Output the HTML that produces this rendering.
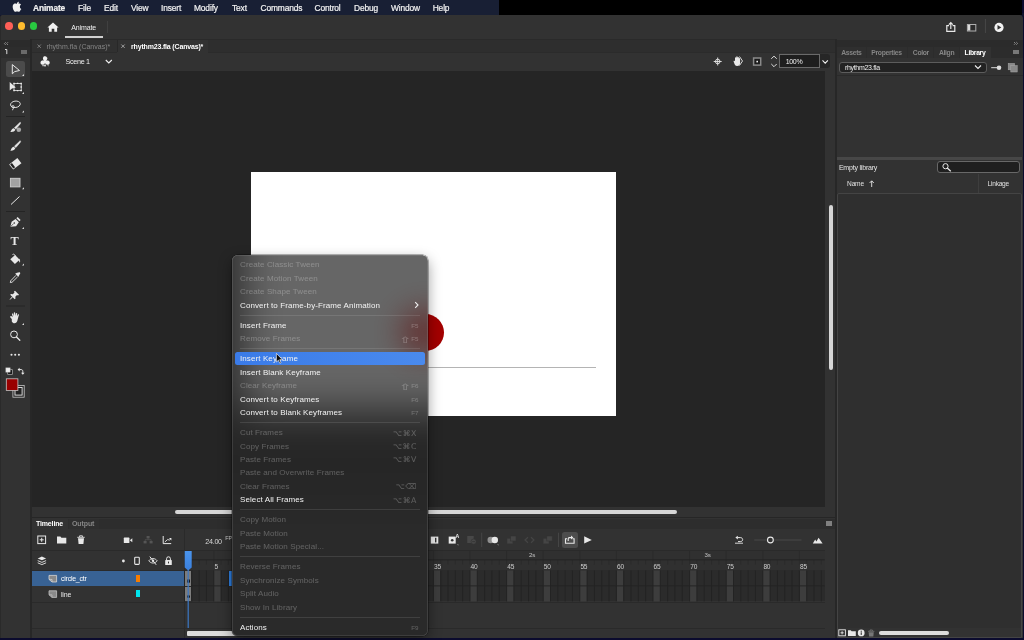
<!DOCTYPE html>
<html><head><meta charset="utf-8"><title>Animate</title>
<style>
*{box-sizing:border-box;margin:0;padding:0}
html,body{width:1024px;height:640px;overflow:hidden;background:#000;font-family:"Liberation Sans",sans-serif;color:#e6e6e6}
.a{position:absolute}
.t{position:absolute;white-space:nowrap;line-height:1}
svg{position:absolute;overflow:visible;pointer-events:none}
#mb .t{top:4.4px;font-size:8.4px;letter-spacing:-.13px;color:#f2f2f2;-webkit-text-stroke:.2px #f2f2f2}
.mi{position:absolute;left:240px;white-space:nowrap;line-height:1;font-size:8px;letter-spacing:.1px;color:#f2f2f2}
.mi.d{color:rgba(255,255,255,.26)}
.sc{position:absolute;white-space:nowrap;line-height:1;font-size:6.6px;color:rgba(255,255,255,.26);right:605.5px;text-align:right;font-family:"Liberation Sans","DejaVu Sans",sans-serif}
.sep{position:absolute;left:240px;width:180px;height:1px;background:rgba(255,255,255,.1)}
</style></head><body><div id="root" style="position:absolute;left:0;top:0;width:1024px;height:640px;overflow:hidden;will-change:transform">

<div class="a" style="left:0px;top:636px;width:1024px;height:4px;background:#0b0b2e;"></div>
<div class="a" style="left:1022px;top:0px;width:2px;height:640px;background:#0b0b2e;"></div>
<div class="a" style="left:0px;top:13px;width:1024px;height:3px;background:#10142e;"></div>
<div class="a" id="mb" style="left:0;top:0;width:1022px;height:14.6px;background:#000">
<div class="a" style="left:0px;top:0px;width:498.7px;height:14.6px;background:#181f34;"></div>
<span class="t" style="left:33px;font-weight:bold">Animate</span>
<span class="t" style="left:78px;">File</span>
<span class="t" style="left:104px;">Edit</span>
<span class="t" style="left:131px;">View</span>
<span class="t" style="left:161px;">Insert</span>
<span class="t" style="left:194px;">Modify</span>
<span class="t" style="left:232px;">Text</span>
<span class="t" style="left:260.5px;">Commands</span>
<span class="t" style="left:314.5px;">Control</span>
<span class="t" style="left:354px;">Debug</span>
<span class="t" style="left:391px;">Window</span>
<span class="t" style="left:432.7px;">Help</span>
</div>
<svg style="left:0;top:0" width="1024" height="640" viewBox="0 0 1024 640"><g transform="translate(11.7,1.6) scale(0.0116,0.0128)" fill="#f2f2f2"><path d="M788 611c-13 30-28 57-46 83-24 34-44 58-59 71-24 22-49 33-76 34-19 0-43-6-70-17s-52-17-75-17c-24 0-50 6-77 17s-49 17-66 18c-26 1-52-10-77-34-17-14-37-39-62-75-27-38-49-81-66-131-18-54-28-106-28-156 0-58 13-108 38-149 20-33 46-60 79-79s69-29 107-30c21 0 49 7 83 19 34 13 56 19 66 19 7 0 32-8 74-23 40-14 73-20 101-18 74 6 130 35 167 88-66 40-99 96-98 168 1 56 21 103 61 140 18 17 38 30 61 40-5 14-10 28-16 41zM619 27c0 44-16 85-48 123-39 45-85 71-136 67-1-5-1-11-1-17 0-42 18-88 51-124 16-19 37-34 62-47 25-12 49-19 71-20 1 6 1 12 1 18z"/></g></svg>
<div class="a" style="left:0px;top:14.6px;width:1022.7px;height:623.2px;background:#323232;border-radius:2.5px 3.5px 0 0"></div>
<div class="a" style="left:5.3px;top:22.4px;width:7.6px;height:7.6px;background:#fe5f57;border-radius:50%"></div>
<div class="a" style="left:17.5px;top:22.4px;width:7.6px;height:7.6px;background:#febc2e;border-radius:50%"></div>
<div class="a" style="left:29.7px;top:22.4px;width:7.6px;height:7.6px;background:#28c840;border-radius:50%"></div>
<span class="t" style="left:71.2px;top:24.2px;font-size:7px;color:#f0f0f0;letter-spacing:-.1px">Animate</span>
<div class="a" style="left:65px;top:36.3px;width:38px;height:1.7px;background:#cfcfcf;"></div>
<div class="a" style="left:107px;top:21px;width:1px;height:12px;background:#404040;"></div>
<svg style="left:0;top:0" width="1024" height="640" viewBox="0 0 1024 640"><path d="M53 22.6l5.6 4.9h-1.5v4.3h-2.8v-3h-2.6v3h-2.8v-4.3h-1.5z" fill="#f0f0f0"/></svg>
<svg style="left:0;top:0" width="1024" height="640" viewBox="0 0 1024 640"><g fill="none" stroke="#e8e8e8" stroke-width="1.2"><path d="M949 25.6h-2.2v5.700000000000001h8v-5.700000000000001h-2.200000000000001M950.8 29v-6M948.8 24.6l2-2l2 2"/></g><rect x="967.4" y="24.5" width="8.4" height="6.5" fill="#2c2c2c" stroke="#b0b0b0" stroke-width="1"/><rect x="967.9" y="25" width="2.4" height="5.5" fill="#ddd"/><path d="M985.4 19V33" stroke="#484848" stroke-width="1"/><circle cx="999" cy="27.4" r="4.6" fill="#f2f2f2"/><path d="M997.5 25.1v4.6l3.8-2.300000000000001z" fill="#323232"/></svg>
<div class="a" style="left:0px;top:39px;width:836px;height:13.5px;background:#2e2e2e;"></div>
<div class="a" style="left:32px;top:51.6px;width:804px;height:0.9px;background:#2b2b2b;"></div>
<div class="a" style="left:0px;top:39px;width:1022.7px;height:1px;background:#2a2a2a;"></div>
<div class="a" style="left:0px;top:39.4px;width:30.2px;height:598.4px;background:#323232;"></div>
<div class="a" style="left:0px;top:17px;width:0.8px;height:621px;background:#2a2a2a;"></div>
<div class="a" style="left:30.2px;top:39.4px;width:1.8px;height:598.4px;background:#272727;"></div>
<div class="a" style="left:1px;top:40.2px;width:29px;height:6.6px;background:#2b2b2b;"></div>
<div class="a" style="left:1px;top:47px;width:29px;height:10.5px;background:#2d2d2d;"></div>
<div class="a" style="left:21px;top:50px;width:6.3px;height:4.3px;background:#6a6a6a;"></div>
<svg style="left:0;top:0" width="1024" height="640" viewBox="0 0 1024 640"><path d="M5.8 42.2l-1.4 1.4l1.4 1.4M8 42.2l-1.4 1.4l1.4 1.4" fill="none" stroke="#aaa" stroke-width=".7"/><path d="M5 49.5h1.8v4.6" fill="none" stroke="#ddd" stroke-width="1"/></svg>
<div class="a" style="left:32px;top:40px;width:85px;height:12.2px;background:#303030;"></div>
<div class="a" style="left:117.4px;top:40px;width:90.8px;height:12.5px;background:#323232;"></div>
<div class="a" style="left:116.6px;top:40px;width:0.8px;height:12.2px;background:#282828;"></div>
<svg style="left:0;top:0" width="1024" height="640" viewBox="0 0 1024 640"><path d="M37.5 44.5l3.4 3.4M40.9 44.5l-3.4 3.4" stroke="#9a9a9a" stroke-width=".7"/><path d="M121.3 44.5l3.4 3.4M124.7 44.5l-3.4 3.4" stroke="#c8c8c8" stroke-width=".7"/></svg>
<span class="t" style="left:46.4px;top:42.7px;font-size:7px;color:#858585;letter-spacing:0">rhythm.fla (Canvas)*</span>
<span class="t" style="left:131px;top:42.7px;font-size:7px;color:#fff;font-weight:bold;letter-spacing:-.17px">rhythm23.fla (Canvas)*</span>
<div class="a" style="left:32px;top:52.5px;width:803.2px;height:18px;background:#323232;"></div>
<span class="t" style="left:65.5px;top:58px;font-size:7.2px;color:#f0f0f0;letter-spacing:-.3px">Scene 1</span>
<span class="t" style="left:38.9px;top:54.6px;font-size:13.6px;color:#f0f0f0;font-family:'DejaVu Sans',sans-serif">♣</span>
<svg style="left:0;top:0" width="1024" height="640" viewBox="0 0 1024 640"><path d="M42.2 65.7h3.6" stroke="#f0f0f0" stroke-width=".8"/><path d="M47.3 65.2h1.2v1.2z" fill="#ddd"/><path d="M105.8 60l3 3l3-3" fill="none" stroke="#f0f0f0" stroke-width="1.1"/></svg>
<svg style="left:0;top:0" width="1024" height="640" viewBox="0 0 1024 640"><g fill="none" stroke="#e8e8e8" stroke-width=".9"><circle cx="717.7" cy="61.5" r="2.3"/><path d="M717.7 57.5v8M713.7 61.5h8"/></g><path d="M734 62.5c-1-1.5 0-2.2 1-1.2v-3.2c0-1 1.3-1 1.3 0v-1c0-1 1.3-1 1.3 0v.6c0-1 1.3-1 1.3 0v1c0-.9 1.2-.9 1.2 0v4.300000000000001c0 2-1 3-3 3s-2.400000000000002-1.5-3.100000000000002-3.5z" fill="#e8e8e8"/><path d="M739.5 56.5l3 4.500000000000001l-3 4.500000000000001" fill="none" stroke="#e8e8e8" stroke-width=".9"/><rect x="753.6" y="58" width="7.1" height="7.1" fill="#1c1c1c" stroke="#8a8a8a" stroke-width="1.5"/><rect x="756.4" y="60.8" width="1.6" height="1.6" fill="#eee"/><path d="M771.3 58.8l2.7-2.7l2.7 2.7M771.3 64l2.7 2.7l2.7-2.7" fill="none" stroke="#e0e0e0" stroke-width="1"/><path d="M822.5 60.4l2.7 2.7l2.7-2.7" fill="none" stroke="#f0f0f0" stroke-width="1.1"/></svg>
<div class="a" style="left:779.4px;top:54.4px;width:40.6px;height:14px;background:#1e1e1e;border:1px solid #6a6a6a"></div>
<div class="a" style="left:820px;top:54.4px;width:10.3px;height:14px;background:#262626;border-radius:0 3px 3px 0;z-index:-0"></div>
<svg style="left:0;top:0" width="1024" height="640" viewBox="0 0 1024 640"><path d="M822.5 60.4l2.7 2.7l2.7-2.7" fill="none" stroke="#f0f0f0" stroke-width="1.1"/></svg>
<span class="t" style="left:785.7px;top:58.3px;font-size:7px;color:#f0f0f0;letter-spacing:-.3px">100%</span>
<div class="a" style="left:32px;top:70.5px;width:792.8px;height:436.2px;background:#252525;"></div>
<div class="a" style="left:824.8px;top:70.5px;width:10.4px;height:436.5px;background:#323232;"></div>
<div class="a" style="left:251px;top:172px;width:365.2px;height:243.5px;background:#fff;"></div>
<div class="a" style="left:405.8px;top:313.5px;width:37.8px;height:37.8px;background:#a30000;border-radius:50%"></div>
<div class="a" style="left:270px;top:367px;width:326px;height:1px;background:#b4b4b4;"></div>
<div class="a" style="left:32px;top:506.7px;width:803.2px;height:10.8px;background:#323232;"></div>
<div class="a" style="left:174.8px;top:510px;width:502px;height:4px;background:#d6d6d6;border-radius:2px"></div>
<div class="a" style="left:828.8px;top:204.8px;width:4px;height:165.4px;background:#d6d6d6;border-radius:2px"></div>
<div class="a" style="left:32px;top:517.1px;width:803.2px;height:1.4px;background:#262626;"></div>
<div class="a" style="left:5.5px;top:60.8px;width:19.5px;height:16px;background:#4b4b4b;border-radius:2.5px"></div>
<svg style="left:0;top:0" width="1024" height="640" viewBox="0 0 1024 640"><path d="M12.3 64.6v9.2l2.4-2.2l4.8-1.1z" fill="none" stroke="#e8e8e8" stroke-width="1" stroke-linejoin="miter"/><path d="M24 74v2h-2z" fill="#ddd"/><path d="M9.7 82v8.6l2.3-2.2l3.8-1z" fill="#e8e8e8"/><rect x="14" y="83.4" width="7.2" height="7.2" fill="none" stroke="#e8e8e8" stroke-width=".8"/><path d="M13.3 82.7h1.500000000000001v1.500000000000001h-1.500000000000001zM20.4 82.7h1.500000000000001v1.500000000000001h-1.500000000000001zM20.4 89.8h1.500000000000001v1.500000000000001h-1.500000000000001zM13.3 89.8h1.500000000000001v1.500000000000001h-1.500000000000001zM16.9 82.7h1.400000000000001v1.400000000000001h-1.400000000000001zM16.9 89.9h1.400000000000001v1.400000000000001h-1.400000000000001zM20.5 86.3h1.400000000000001v1.400000000000001h-1.400000000000001z" fill="#e8e8e8"/><path d="M24 92v2h-2z" fill="#ddd"/><g fill="none" stroke="#e8e8e8" stroke-width=".9"><ellipse cx="15.4" cy="104.3" rx="4.9" ry="3.2" transform="rotate(-8 15.4 104.3)"/><circle cx="13" cy="106.7" r="1.1"/><path d="M13.3 107.8c.3 1-.3 1.800000000000001-1.300000000000001 2.400000000000001"/></g><path d="M24 110.5v2h-2z" fill="#ddd"/><path d="M20.3 122.3c.5.5.3 1-.1 1.600000000000001l-4.300000000000001 5.200000000000001l-1.500000000000001-1.400000000000001l5-4.800000000000001c.4-.4.7-.7.9-.6z" fill="#e8e8e8" stroke="#e8e8e8" stroke-width=".5"/><path d="M13.8 128.3l1.5 1.5c-.5 1.800000000000001-2.5 2.400000000000001-5 2.200000000000001c1.200000000000001-1 .8-3.200000000000001 3.500000000000001-3.700000000000001z" fill="#e8e8e8"/><circle cx="18.8" cy="129.8" r="2.3" fill="#a8a8a8"/><path d="M20.3 140.8c.5.5.3 1-.1 1.600000000000001l-4.300000000000001 5.200000000000001l-1.500000000000001-1.400000000000001l5-4.800000000000001c.4-.4.7-.7.9-.6z" fill="#e8e8e8" stroke="#e8e8e8" stroke-width=".5"/><path d="M13.8 146.8l1.5 1.5c-.5 1.800000000000001-2.500000000000001 2.600000000000001-5 2.400000000000001c1.200000000000001-1 .8-3.400000000000001 3.500000000000001-3.900000000000001z" fill="#e8e8e8"/><g transform="rotate(-38 15.3 163.8)"><rect x="10.1" y="160.5" width="10.4" height="6.6" fill="#e8e8e8"/><rect x="10.8" y="161.2" width="2.3" height="5.2" fill="#222"/></g><rect x="10.4" y="178.3" width="9.6" height="8.6" fill="#a2a2a2" stroke="#cfcfcf" stroke-width=".9"/><path d="M24 187.2v2h-2z" fill="#ddd"/><path d="M11 204.5l8.5-8" stroke="#e8e8e8" stroke-width="1"/><path d="M10.4 226.8l1.2-5l4-2.700000000000001l3.2 3.2l-2.700000000000001 4z" fill="#e8e8e8"/><path d="M16.4 218.3l1.2-1.2l3 3l-1.200000000000001 1.200000000000001z" fill="#e8e8e8"/><path d="M10.600000000000001 226.6l3-3" stroke="#323232" stroke-width=".7"/><circle cx="14.3" cy="223" r=".8" fill="#323232"/><path d="M24 227v2h-2z" fill="#ddd"/><path d="M10 264l2-2.500000000000001" stroke="#e8e8e8" stroke-width="0"/><path d="M10.3 259.3l4.8-4.3l4.600000000000001 4.800000000000001l-4.800000000000001 4.300000000000001z" fill="#e8e8e8"/><path d="M12.5 254.5c1.500000000000001-1.000000000000001 2.700000000000001.2 3.0000000000000004 2.8" fill="none" stroke="#e8e8e8" stroke-width=".9"/><path d="M19.2 258.5c.8 1.2 1.300000000000001 2.700000000000001.6 4.200000000000001c-.9-1.2-.9-2.700000000000001-.6-4.200000000000001z" fill="#e8e8e8"/><path d="M24 263.5v2h-2z" fill="#ddd"/><path d="M18.2 272.8c.8-.8 2-.4 2.000000000000001.6c0 .5-.6 1.100000000000001-1.400000000000001 1.800000000000001l.5.5l-1 1l-3-3l1-1l.5.5c.5-.6 1-.9 1.400000000000001-.4z" fill="#e8e8e8"/><path d="M16 275.3l-5.3 5.5l-.4 1.800000000000001l1.800000000000001-.4l5.500000000000001-5.300000000000001" fill="none" stroke="#e8e8e8" stroke-width=".9"/><path d="M15 290.8l4 4l-1 .7l-1 -.5l-1.700000000000001 1.700000000000001l.2 1.800000000000001l-.8.8l-4.5-4.5l.8-.8l1.800000000000001.2l1.700000000000001-1.700000000000001l-.5-1z" fill="#e8e8e8"/><path d="M12.3 297l-2.2 2.5" stroke="#e8e8e8" stroke-width="1"/><path transform="translate(0,1)" d="M11.8 318c-1.500000000000001-1.600000000000001-2.200000000000001-2.200000000000001-1.300000000000001-2.800000000000001c.8-.4 1.500000000000001.5 2.200000000000001 1.100000000000001l-.7-3.000000000000001c-.2-.9.9-1.300000000000001 1.200000000000001-.4l.7 2l-.1-2.800000000000001c0-1 1.300000000000001-1 1.400000000000001 0l.2 2.700000000000001l.5-2.300000000000001c.2-.9 1.400000000000001-.7 1.300000000000001.2l-.3 2.600000000000001l.9-1.600000000000001c.5-.8 1.500000000000001-.3 1.100000000000001.6c-.8 2-.9 3.500000000000001-1.400000000000001 5.000000000000001c-.5 1.700000000000001-1.600000000000001 3.000000000000001-3.000000000000001 3.000000000000001c-1.300000000000001 0-2.000000000000001-.9-2.700000000000001-1.900000000000001z" fill="#e8e8e8"/><path d="M24 323v2h-2z" fill="#ddd"/><circle cx="14" cy="334.4" r="3.4" fill="none" stroke="#e8e8e8" stroke-width="1"/><path d="M16.5 337l3.3 3.300000000000001" stroke="#e8e8e8" stroke-width="1.3" stroke-linecap="round"/><circle cx="11.5" cy="354.8" r="1.05" fill="#e8e8e8"/><circle cx="15.2" cy="354.8" r="1.05" fill="#e8e8e8"/><circle cx="18.9" cy="354.8" r="1.05" fill="#e8e8e8"/><rect x="7.700000000000001" y="369.7" width="4.6" height="4.6" fill="#111" stroke="#bbb" stroke-width=".7"/><rect x="5.800000000000001" y="367.8" width="4.4" height="4.4" fill="#eee" stroke="#999" stroke-width=".5"/><path d="M19 369.6h2.200000000000001c1.200000000000001 0 1.600000000000001.8 1.600000000000001 1.800000000000001v2" fill="none" stroke="#e8e8e8" stroke-width="1"/><path d="M19.6 367.8l-2 1.800000000000001l2 1.800000000000001zM21 372.8l1.800000000000001 2l1.800000000000001-2z" fill="#e8e8e8"/><rect x="12.9" y="385.4" width="11.3" height="11.8" fill="#2a2a2a" stroke="#c8c8c8" stroke-width=".8"/><rect x="15" y="387.5" width="7.1" height="7.6" fill="#222" stroke="#e8e8e8" stroke-width=".9"/><rect x="6.3" y="378.8" width="11.6" height="11.6" fill="#990000" stroke="#c4c4c4" stroke-width=".8"/><path d="M6 116.5h19" stroke="#242424" stroke-width="1"/><path d="M6 211.5h19" stroke="#242424" stroke-width="1"/><path d="M6 306h19" stroke="#242424" stroke-width="1"/></svg>
<span class="t" style="left:10.6px;top:235.2px;font-size:12.3px;color:#e8e8e8;font-family:'Liberation Serif',serif;font-weight:bold">T</span>
<div class="a" style="left:32px;top:518.5px;width:803.2px;height:10px;background:#2d2d2d;"></div>
<div class="a" style="left:32px;top:518.5px;width:36px;height:10.5px;background:#323232;"></div>
<div class="a" style="left:68.5px;top:518.5px;width:30px;height:10px;background:#2f2f2f;"></div>
<span class="t" style="left:36px;top:519.8px;font-size:7px;color:#fff;font-weight:bold;letter-spacing:-.15px">Timeline</span>
<span class="t" style="left:72px;top:519.8px;font-size:7px;color:#858585;font-weight:bold;letter-spacing:-.1px">Output</span>
<div class="a" style="left:826px;top:521.1px;width:6.1px;height:4.6px;background:#808080;"></div>
<div class="a" style="left:32px;top:528.5px;width:803.2px;height:109.3px;background:#323232;"></div>
<div class="a" style="left:32px;top:550px;width:792.8px;height:1px;background:#2a2a2a;"></div>
<div class="a" style="left:184px;top:528.5px;width:1px;height:109px;background:#2a2a2a;"></div>
<div class="a" style="left:32px;top:570.9px;width:152px;height:15px;background:#386294;"></div>
<div class="a" style="left:32px;top:570.2px;width:792.8px;height:0.8px;background:#2a2a2a;"></div>
<div class="a" style="left:32px;top:601.5px;width:792.8px;height:1px;background:#2a2a2a;"></div>
<div class="a" style="left:32px;top:628.3px;width:792.8px;height:1px;background:#2a2a2a;"></div>
<span class="t" style="left:61px;top:575px;font-size:7px;color:#fff;letter-spacing:-.25px">circle_ctr</span>
<span class="t" style="left:61px;top:590.5px;font-size:7px;color:#e6e6e6;letter-spacing:-.2px">line</span>
<div class="a" style="left:135.8px;top:574.7px;width:4px;height:7.3px;background:#f57c00;"></div>
<div class="a" style="left:135.8px;top:590px;width:4px;height:7.3px;background:#00e5ee;"></div>
<svg style="left:0;top:0" width="1024" height="640" viewBox="0 0 1024 640"><rect x="37.8" y="536" width="7.8" height="7.6" fill="none" stroke="#e8e8e8" stroke-width="1"/><path d="M41.7 537.8v4M39.7 539.8h4" stroke="#e8e8e8" stroke-width="1"/><path d="M57 536.6h3.400000000000001l1 1.200000000000001h4.900000000000001v5.700000000000001h-9.3z" fill="#e8e8e8"/><path d="M77.3 537.3h7.4M79.6 537v-1.200000000000001h2.800000000000001v1.200000000000001" fill="none" stroke="#e8e8e8" stroke-width=".9"/><path d="M78 538.3h6l-.6 5.700000000000001h-4.800000000000001z" fill="#e8e8e8"/><rect x="123.8" y="537.6" width="5.6" height="5.4" rx=".6" fill="#e8e8e8"/><path d="M129.8 540.3l2.500000000000001-2.000000000000001v4.000000000000001z" fill="#e8e8e8"/><g fill="#555"><rect x="146.6" y="536" width="3" height="2.4"/><rect x="143.6" y="541" width="3" height="2.4"/><rect x="149.6" y="541" width="3" height="2.4"/></g><path d="M148.1 538.4v1.300000000000001M145.1 541v-1.300000000000001h6v1.300000000000001" fill="none" stroke="#555" stroke-width=".7"/><path d="M163.2 536v7.6h8" fill="none" stroke="#e8e8e8" stroke-width="1"/><path d="M164.8 542l3-2.600000000000001l1.400000000000001.8l1.800000000000001-1.600000000000001" fill="none" stroke="#e8e8e8" stroke-width=".9"/><path d="M169 538h2.400000000000001v2.400000000000001z" fill="#e8e8e8"/><path d="M41.9 556.6l4.2 1.800000000000001l-4.200000000000001 1.800000000000001l-4.200000000000001-1.800000000000001z" fill="#e8e8e8"/><path d="M37.7 560.6l4.2 1.800000000000001l4.200000000000001-1.800000000000001M37.7 562.8l4.2 1.800000000000001l4.200000000000001-1.800000000000001" fill="none" stroke="#e8e8e8" stroke-width=".9"/><circle cx="123.4" cy="561" r="1.4" fill="#e8e8e8"/><rect x="134.7" y="557.2" width="4.6" height="7.2" rx=".8" fill="none" stroke="#e8e8e8" stroke-width="1.1"/><path d="M148.8 560.8c2.200000000000001-3.000000000000001 6.200000000000001-3.000000000000001 8.4 0c-2.200000000000001 3.000000000000001-6.200000000000001 3.000000000000001-8.4 0z" fill="none" stroke="#e8e8e8" stroke-width=".9"/><circle cx="153" cy="560.8" r="1.2" fill="#e8e8e8"/><path d="M149.8 556.6l6.4 8.2" stroke="#e8e8e8" stroke-width="1"/><rect x="165.2" y="560" width="6.6" height="5" rx=".6" fill="#e8e8e8"/><path d="M166.6 560v-1.300000000000001a1.900000000000001 1.900000000000001 0 0 1 3.800000000000001 0v1.300000000000001" fill="none" stroke="#e8e8e8" stroke-width="1"/><rect x="168" y="561.6" width="1" height="1.8" fill="#323232"/><path d="M49 575.4h7.6v6.6h-4.6l-3-2.600000000000001z" fill="#8a8a8a" stroke="#d8d8d8" stroke-width=".8"/><path d="M49 579.4h3v2.600000000000001" fill="none" stroke="#d8d8d8" stroke-width=".7"/><path d="M49 590.8h7.6v6.6h-4.6l-3-2.600000000000001z" fill="#8a8a8a" stroke="#c0c0c0" stroke-width=".8"/><path d="M49 594.8h3v2.600000000000001" fill="none" stroke="#c0c0c0" stroke-width=".7"/></svg>
<div class="a" style="left:185.0px;top:551px;width:640.3px;height:19.5px;background:#303030;"></div>
<div class="a" style="left:185.0px;top:570.4px;width:640.3px;height:31px;background:#2b2b2b;"></div>
<svg style="left:0;top:0" width="1024" height="640" viewBox="0 0 1024 640"><rect x="213.78" y="570.4" width="7.32" height="31" fill="#3d3d3d"/><rect x="250.38" y="570.4" width="7.32" height="31" fill="#3d3d3d"/><rect x="286.98" y="570.4" width="7.32" height="31" fill="#3d3d3d"/><rect x="323.58" y="570.4" width="7.32" height="31" fill="#3d3d3d"/><rect x="360.18" y="570.4" width="7.32" height="31" fill="#3d3d3d"/><rect x="396.78" y="570.4" width="7.32" height="31" fill="#3d3d3d"/><rect x="433.38" y="570.4" width="7.32" height="31" fill="#3d3d3d"/><rect x="469.98" y="570.4" width="7.32" height="31" fill="#3d3d3d"/><rect x="506.58" y="570.4" width="7.32" height="31" fill="#3d3d3d"/><rect x="543.18" y="570.4" width="7.32" height="31" fill="#3d3d3d"/><rect x="579.78" y="570.4" width="7.32" height="31" fill="#3d3d3d"/><rect x="616.38" y="570.4" width="7.32" height="31" fill="#3d3d3d"/><rect x="652.98" y="570.4" width="7.32" height="31" fill="#3d3d3d"/><rect x="689.58" y="570.4" width="7.32" height="31" fill="#3d3d3d"/><rect x="726.18" y="570.4" width="7.32" height="31" fill="#3d3d3d"/><rect x="762.78" y="570.4" width="7.32" height="31" fill="#3d3d3d"/><rect x="799.38" y="570.4" width="7.32" height="31" fill="#3d3d3d"/><path d="M184.50 570.4V601.4" stroke="#232323" stroke-width="1"/><path d="M184.50 560V564.6" stroke="#2a2a2a" stroke-width="0.8"/><path d="M191.82 570.4V601.4" stroke="#232323" stroke-width="1"/><path d="M191.82 560V564.6" stroke="#2a2a2a" stroke-width="0.8"/><path d="M199.14 570.4V601.4" stroke="#232323" stroke-width="1"/><path d="M199.14 560V564.6" stroke="#2a2a2a" stroke-width="0.8"/><path d="M206.46 570.4V601.4" stroke="#232323" stroke-width="1"/><path d="M206.46 560V564.6" stroke="#2a2a2a" stroke-width="0.8"/><path d="M213.78 570.4V601.4" stroke="#232323" stroke-width="1"/><path d="M213.78 560V564.6" stroke="#2a2a2a" stroke-width="0.8"/><path d="M213.78 551V560" stroke="#2a2a2a" stroke-width="0.8"/><path d="M221.10 570.4V601.4" stroke="#232323" stroke-width="1"/><path d="M221.10 560V564.6" stroke="#2a2a2a" stroke-width="0.8"/><path d="M228.42 570.4V601.4" stroke="#232323" stroke-width="1"/><path d="M228.42 560V564.6" stroke="#2a2a2a" stroke-width="0.8"/><path d="M235.74 570.4V601.4" stroke="#232323" stroke-width="1"/><path d="M235.74 560V564.6" stroke="#2a2a2a" stroke-width="0.8"/><path d="M243.06 570.4V601.4" stroke="#232323" stroke-width="1"/><path d="M243.06 560V564.6" stroke="#2a2a2a" stroke-width="0.8"/><path d="M250.38 570.4V601.4" stroke="#232323" stroke-width="1"/><path d="M250.38 560V564.6" stroke="#2a2a2a" stroke-width="0.8"/><path d="M250.38 551V560" stroke="#2a2a2a" stroke-width="0.8"/><path d="M257.70 570.4V601.4" stroke="#232323" stroke-width="1"/><path d="M257.70 560V564.6" stroke="#2a2a2a" stroke-width="0.8"/><path d="M265.02 570.4V601.4" stroke="#232323" stroke-width="1"/><path d="M265.02 560V564.6" stroke="#2a2a2a" stroke-width="0.8"/><path d="M272.34 570.4V601.4" stroke="#232323" stroke-width="1"/><path d="M272.34 560V564.6" stroke="#2a2a2a" stroke-width="0.8"/><path d="M279.66 570.4V601.4" stroke="#232323" stroke-width="1"/><path d="M279.66 560V564.6" stroke="#2a2a2a" stroke-width="0.8"/><path d="M286.98 570.4V601.4" stroke="#232323" stroke-width="1"/><path d="M286.98 560V564.6" stroke="#2a2a2a" stroke-width="0.8"/><path d="M286.98 551V560" stroke="#2a2a2a" stroke-width="0.8"/><path d="M294.30 570.4V601.4" stroke="#232323" stroke-width="1"/><path d="M294.30 560V564.6" stroke="#2a2a2a" stroke-width="0.8"/><path d="M301.62 570.4V601.4" stroke="#232323" stroke-width="1"/><path d="M301.62 560V564.6" stroke="#2a2a2a" stroke-width="0.8"/><path d="M308.94 570.4V601.4" stroke="#232323" stroke-width="1"/><path d="M308.94 560V564.6" stroke="#2a2a2a" stroke-width="0.8"/><path d="M316.26 570.4V601.4" stroke="#232323" stroke-width="1"/><path d="M316.26 560V564.6" stroke="#2a2a2a" stroke-width="0.8"/><path d="M323.58 570.4V601.4" stroke="#232323" stroke-width="1"/><path d="M323.58 560V564.6" stroke="#2a2a2a" stroke-width="0.8"/><path d="M323.58 551V560" stroke="#2a2a2a" stroke-width="0.8"/><path d="M330.90 570.4V601.4" stroke="#232323" stroke-width="1"/><path d="M330.90 560V564.6" stroke="#2a2a2a" stroke-width="0.8"/><path d="M338.22 570.4V601.4" stroke="#232323" stroke-width="1"/><path d="M338.22 560V564.6" stroke="#2a2a2a" stroke-width="0.8"/><path d="M345.54 570.4V601.4" stroke="#232323" stroke-width="1"/><path d="M345.54 560V564.6" stroke="#2a2a2a" stroke-width="0.8"/><path d="M352.86 570.4V601.4" stroke="#232323" stroke-width="1"/><path d="M352.86 560V564.6" stroke="#2a2a2a" stroke-width="0.8"/><path d="M360.18 570.4V601.4" stroke="#232323" stroke-width="1"/><path d="M360.18 560V564.6" stroke="#2a2a2a" stroke-width="0.8"/><path d="M360.18 551V560" stroke="#2a2a2a" stroke-width="0.8"/><path d="M367.50 570.4V601.4" stroke="#232323" stroke-width="1"/><path d="M367.50 560V564.6" stroke="#2a2a2a" stroke-width="0.8"/><path d="M374.82 570.4V601.4" stroke="#232323" stroke-width="1"/><path d="M374.82 560V564.6" stroke="#2a2a2a" stroke-width="0.8"/><path d="M382.14 570.4V601.4" stroke="#232323" stroke-width="1"/><path d="M382.14 560V564.6" stroke="#2a2a2a" stroke-width="0.8"/><path d="M389.46 570.4V601.4" stroke="#232323" stroke-width="1"/><path d="M389.46 560V564.6" stroke="#2a2a2a" stroke-width="0.8"/><path d="M396.78 570.4V601.4" stroke="#232323" stroke-width="1"/><path d="M396.78 560V564.6" stroke="#2a2a2a" stroke-width="0.8"/><path d="M396.78 551V560" stroke="#2a2a2a" stroke-width="0.8"/><path d="M404.10 570.4V601.4" stroke="#232323" stroke-width="1"/><path d="M404.10 560V564.6" stroke="#2a2a2a" stroke-width="0.8"/><path d="M411.42 570.4V601.4" stroke="#232323" stroke-width="1"/><path d="M411.42 560V564.6" stroke="#2a2a2a" stroke-width="0.8"/><path d="M418.74 570.4V601.4" stroke="#232323" stroke-width="1"/><path d="M418.74 560V564.6" stroke="#2a2a2a" stroke-width="0.8"/><path d="M426.06 570.4V601.4" stroke="#232323" stroke-width="1"/><path d="M426.06 560V564.6" stroke="#2a2a2a" stroke-width="0.8"/><path d="M433.38 570.4V601.4" stroke="#232323" stroke-width="1"/><path d="M433.38 560V564.6" stroke="#2a2a2a" stroke-width="0.8"/><path d="M433.38 551V560" stroke="#2a2a2a" stroke-width="0.8"/><path d="M440.70 570.4V601.4" stroke="#232323" stroke-width="1"/><path d="M440.70 560V564.6" stroke="#2a2a2a" stroke-width="0.8"/><path d="M448.02 570.4V601.4" stroke="#232323" stroke-width="1"/><path d="M448.02 560V564.6" stroke="#2a2a2a" stroke-width="0.8"/><path d="M455.34 570.4V601.4" stroke="#232323" stroke-width="1"/><path d="M455.34 560V564.6" stroke="#2a2a2a" stroke-width="0.8"/><path d="M462.66 570.4V601.4" stroke="#232323" stroke-width="1"/><path d="M462.66 560V564.6" stroke="#2a2a2a" stroke-width="0.8"/><path d="M469.98 570.4V601.4" stroke="#232323" stroke-width="1"/><path d="M469.98 560V564.6" stroke="#2a2a2a" stroke-width="0.8"/><path d="M469.98 551V560" stroke="#2a2a2a" stroke-width="0.8"/><path d="M477.30 570.4V601.4" stroke="#232323" stroke-width="1"/><path d="M477.30 560V564.6" stroke="#2a2a2a" stroke-width="0.8"/><path d="M484.62 570.4V601.4" stroke="#232323" stroke-width="1"/><path d="M484.62 560V564.6" stroke="#2a2a2a" stroke-width="0.8"/><path d="M491.94 570.4V601.4" stroke="#232323" stroke-width="1"/><path d="M491.94 560V564.6" stroke="#2a2a2a" stroke-width="0.8"/><path d="M499.26 570.4V601.4" stroke="#232323" stroke-width="1"/><path d="M499.26 560V564.6" stroke="#2a2a2a" stroke-width="0.8"/><path d="M506.58 570.4V601.4" stroke="#232323" stroke-width="1"/><path d="M506.58 560V564.6" stroke="#2a2a2a" stroke-width="0.8"/><path d="M506.58 551V560" stroke="#2a2a2a" stroke-width="0.8"/><path d="M513.90 570.4V601.4" stroke="#232323" stroke-width="1"/><path d="M513.90 560V564.6" stroke="#2a2a2a" stroke-width="0.8"/><path d="M521.22 570.4V601.4" stroke="#232323" stroke-width="1"/><path d="M521.22 560V564.6" stroke="#2a2a2a" stroke-width="0.8"/><path d="M528.54 570.4V601.4" stroke="#232323" stroke-width="1"/><path d="M528.54 560V564.6" stroke="#2a2a2a" stroke-width="0.8"/><path d="M535.86 570.4V601.4" stroke="#232323" stroke-width="1"/><path d="M535.86 560V564.6" stroke="#2a2a2a" stroke-width="0.8"/><path d="M543.18 570.4V601.4" stroke="#232323" stroke-width="1"/><path d="M543.18 560V564.6" stroke="#2a2a2a" stroke-width="0.8"/><path d="M543.18 551V560" stroke="#2a2a2a" stroke-width="0.8"/><path d="M550.50 570.4V601.4" stroke="#232323" stroke-width="1"/><path d="M550.50 560V564.6" stroke="#2a2a2a" stroke-width="0.8"/><path d="M557.82 570.4V601.4" stroke="#232323" stroke-width="1"/><path d="M557.82 560V564.6" stroke="#2a2a2a" stroke-width="0.8"/><path d="M565.14 570.4V601.4" stroke="#232323" stroke-width="1"/><path d="M565.14 560V564.6" stroke="#2a2a2a" stroke-width="0.8"/><path d="M572.46 570.4V601.4" stroke="#232323" stroke-width="1"/><path d="M572.46 560V564.6" stroke="#2a2a2a" stroke-width="0.8"/><path d="M579.78 570.4V601.4" stroke="#232323" stroke-width="1"/><path d="M579.78 560V564.6" stroke="#2a2a2a" stroke-width="0.8"/><path d="M579.78 551V560" stroke="#2a2a2a" stroke-width="0.8"/><path d="M587.10 570.4V601.4" stroke="#232323" stroke-width="1"/><path d="M587.10 560V564.6" stroke="#2a2a2a" stroke-width="0.8"/><path d="M594.42 570.4V601.4" stroke="#232323" stroke-width="1"/><path d="M594.42 560V564.6" stroke="#2a2a2a" stroke-width="0.8"/><path d="M601.74 570.4V601.4" stroke="#232323" stroke-width="1"/><path d="M601.74 560V564.6" stroke="#2a2a2a" stroke-width="0.8"/><path d="M609.06 570.4V601.4" stroke="#232323" stroke-width="1"/><path d="M609.06 560V564.6" stroke="#2a2a2a" stroke-width="0.8"/><path d="M616.38 570.4V601.4" stroke="#232323" stroke-width="1"/><path d="M616.38 560V564.6" stroke="#2a2a2a" stroke-width="0.8"/><path d="M616.38 551V560" stroke="#2a2a2a" stroke-width="0.8"/><path d="M623.70 570.4V601.4" stroke="#232323" stroke-width="1"/><path d="M623.70 560V564.6" stroke="#2a2a2a" stroke-width="0.8"/><path d="M631.02 570.4V601.4" stroke="#232323" stroke-width="1"/><path d="M631.02 560V564.6" stroke="#2a2a2a" stroke-width="0.8"/><path d="M638.34 570.4V601.4" stroke="#232323" stroke-width="1"/><path d="M638.34 560V564.6" stroke="#2a2a2a" stroke-width="0.8"/><path d="M645.66 570.4V601.4" stroke="#232323" stroke-width="1"/><path d="M645.66 560V564.6" stroke="#2a2a2a" stroke-width="0.8"/><path d="M652.98 570.4V601.4" stroke="#232323" stroke-width="1"/><path d="M652.98 560V564.6" stroke="#2a2a2a" stroke-width="0.8"/><path d="M652.98 551V560" stroke="#2a2a2a" stroke-width="0.8"/><path d="M660.30 570.4V601.4" stroke="#232323" stroke-width="1"/><path d="M660.30 560V564.6" stroke="#2a2a2a" stroke-width="0.8"/><path d="M667.62 570.4V601.4" stroke="#232323" stroke-width="1"/><path d="M667.62 560V564.6" stroke="#2a2a2a" stroke-width="0.8"/><path d="M674.94 570.4V601.4" stroke="#232323" stroke-width="1"/><path d="M674.94 560V564.6" stroke="#2a2a2a" stroke-width="0.8"/><path d="M682.26 570.4V601.4" stroke="#232323" stroke-width="1"/><path d="M682.26 560V564.6" stroke="#2a2a2a" stroke-width="0.8"/><path d="M689.58 570.4V601.4" stroke="#232323" stroke-width="1"/><path d="M689.58 560V564.6" stroke="#2a2a2a" stroke-width="0.8"/><path d="M689.58 551V560" stroke="#2a2a2a" stroke-width="0.8"/><path d="M696.90 570.4V601.4" stroke="#232323" stroke-width="1"/><path d="M696.90 560V564.6" stroke="#2a2a2a" stroke-width="0.8"/><path d="M704.22 570.4V601.4" stroke="#232323" stroke-width="1"/><path d="M704.22 560V564.6" stroke="#2a2a2a" stroke-width="0.8"/><path d="M711.54 570.4V601.4" stroke="#232323" stroke-width="1"/><path d="M711.54 560V564.6" stroke="#2a2a2a" stroke-width="0.8"/><path d="M718.86 570.4V601.4" stroke="#232323" stroke-width="1"/><path d="M718.86 560V564.6" stroke="#2a2a2a" stroke-width="0.8"/><path d="M726.18 570.4V601.4" stroke="#232323" stroke-width="1"/><path d="M726.18 560V564.6" stroke="#2a2a2a" stroke-width="0.8"/><path d="M726.18 551V560" stroke="#2a2a2a" stroke-width="0.8"/><path d="M733.50 570.4V601.4" stroke="#232323" stroke-width="1"/><path d="M733.50 560V564.6" stroke="#2a2a2a" stroke-width="0.8"/><path d="M740.82 570.4V601.4" stroke="#232323" stroke-width="1"/><path d="M740.82 560V564.6" stroke="#2a2a2a" stroke-width="0.8"/><path d="M748.14 570.4V601.4" stroke="#232323" stroke-width="1"/><path d="M748.14 560V564.6" stroke="#2a2a2a" stroke-width="0.8"/><path d="M755.46 570.4V601.4" stroke="#232323" stroke-width="1"/><path d="M755.46 560V564.6" stroke="#2a2a2a" stroke-width="0.8"/><path d="M762.78 570.4V601.4" stroke="#232323" stroke-width="1"/><path d="M762.78 560V564.6" stroke="#2a2a2a" stroke-width="0.8"/><path d="M762.78 551V560" stroke="#2a2a2a" stroke-width="0.8"/><path d="M770.10 570.4V601.4" stroke="#232323" stroke-width="1"/><path d="M770.10 560V564.6" stroke="#2a2a2a" stroke-width="0.8"/><path d="M777.42 570.4V601.4" stroke="#232323" stroke-width="1"/><path d="M777.42 560V564.6" stroke="#2a2a2a" stroke-width="0.8"/><path d="M784.74 570.4V601.4" stroke="#232323" stroke-width="1"/><path d="M784.74 560V564.6" stroke="#2a2a2a" stroke-width="0.8"/><path d="M792.06 570.4V601.4" stroke="#232323" stroke-width="1"/><path d="M792.06 560V564.6" stroke="#2a2a2a" stroke-width="0.8"/><path d="M799.38 570.4V601.4" stroke="#232323" stroke-width="1"/><path d="M799.38 560V564.6" stroke="#2a2a2a" stroke-width="0.8"/><path d="M799.38 551V560" stroke="#2a2a2a" stroke-width="0.8"/><path d="M806.70 570.4V601.4" stroke="#232323" stroke-width="1"/><path d="M806.70 560V564.6" stroke="#2a2a2a" stroke-width="0.8"/><path d="M814.02 570.4V601.4" stroke="#232323" stroke-width="1"/><path d="M814.02 560V564.6" stroke="#2a2a2a" stroke-width="0.8"/><path d="M821.34 570.4V601.4" stroke="#232323" stroke-width="1"/><path d="M821.34 560V564.6" stroke="#2a2a2a" stroke-width="0.8"/><path d="M185 559.9H824.8M184.5 585.9H824.8" stroke="#242424" stroke-width="1"/></svg>
<span class="t" style="left:214.4px;top:563.8px;font-size:6.6px;color:#cdcdcd;letter-spacing:-.2px">5</span>
<span class="t" style="left:251.0px;top:563.8px;font-size:6.6px;color:#cdcdcd;letter-spacing:-.2px">10</span>
<span class="t" style="left:287.6px;top:563.8px;font-size:6.6px;color:#cdcdcd;letter-spacing:-.2px">15</span>
<span class="t" style="left:324.2px;top:563.8px;font-size:6.6px;color:#cdcdcd;letter-spacing:-.2px">20</span>
<span class="t" style="left:360.8px;top:563.8px;font-size:6.6px;color:#cdcdcd;letter-spacing:-.2px">25</span>
<span class="t" style="left:397.4px;top:563.8px;font-size:6.6px;color:#cdcdcd;letter-spacing:-.2px">30</span>
<span class="t" style="left:434.0px;top:563.8px;font-size:6.6px;color:#cdcdcd;letter-spacing:-.2px">35</span>
<span class="t" style="left:470.6px;top:563.8px;font-size:6.6px;color:#cdcdcd;letter-spacing:-.2px">40</span>
<span class="t" style="left:507.2px;top:563.8px;font-size:6.6px;color:#cdcdcd;letter-spacing:-.2px">45</span>
<span class="t" style="left:543.8px;top:563.8px;font-size:6.6px;color:#cdcdcd;letter-spacing:-.2px">50</span>
<span class="t" style="left:580.4px;top:563.8px;font-size:6.6px;color:#cdcdcd;letter-spacing:-.2px">55</span>
<span class="t" style="left:617.0px;top:563.8px;font-size:6.6px;color:#cdcdcd;letter-spacing:-.2px">60</span>
<span class="t" style="left:653.6px;top:563.8px;font-size:6.6px;color:#cdcdcd;letter-spacing:-.2px">65</span>
<span class="t" style="left:690.2px;top:563.8px;font-size:6.6px;color:#cdcdcd;letter-spacing:-.2px">70</span>
<span class="t" style="left:726.8px;top:563.8px;font-size:6.6px;color:#cdcdcd;letter-spacing:-.2px">75</span>
<span class="t" style="left:763.4px;top:563.8px;font-size:6.6px;color:#cdcdcd;letter-spacing:-.2px">80</span>
<span class="t" style="left:800.0px;top:563.8px;font-size:6.6px;color:#cdcdcd;letter-spacing:-.2px">85</span>
<span class="t" style="left:529px;top:552.3px;font-size:6.2px;color:#c4c4c4;letter-spacing:-.2px">2s</span>
<span class="t" style="left:704.5px;top:552.3px;font-size:6.2px;color:#c4c4c4;letter-spacing:-.2px">3s</span>
<span class="t" style="left:205.3px;top:538px;font-size:7.2px;color:#d8d8d8;letter-spacing:-.3px">24.00</span>
<span class="t" style="left:225.2px;top:536px;font-size:5.6px;color:#c8c8c8;letter-spacing:-.2px">FPS</span>
<div class="a" style="left:184.9px;top:571px;width:6.6px;height:15px;background:#7c7c7c;"></div>
<div class="a" style="left:184.9px;top:586.6px;width:6.6px;height:14.8px;background:#7c7c7c;"></div>
<div class="a" style="left:186.6px;top:579.4px;width:3.2px;height:3.2px;background:#151515;border-radius:50%"></div>
<div class="a" style="left:186.6px;top:594.9px;width:3.2px;height:3.2px;background:#151515;border-radius:50%"></div>
<div class="a" style="left:228.5px;top:571px;width:4px;height:15px;background:#2f7fe0;"></div>
<svg style="left:0;top:0" width="1024" height="640" viewBox="0 0 1024 640"><defs><linearGradient id="ph" x1="0" y1="0" x2="0" y2="1"><stop offset="0" stop-color="#4a94ec"/><stop offset="1" stop-color="#3a7fdc"/></linearGradient></defs><path d="M184.7 551h7v16.6l-3.5 2.900000000000001l-3.500000000000001-2.900000000000001z" fill="url(#ph)"/><path d="M188.2 570V628" stroke="#3b78c5" stroke-width="1.2"/></svg>
<svg style="left:0;top:0" width="1024" height="640" viewBox="0 0 1024 640"><rect x="430.8" y="536.6" width="7.5" height="7" fill="#e8e8e8"/><rect x="435" y="537.8" width="1.4" height="4.6" fill="#323232"/><rect x="448.7" y="536.6" width="7" height="7" fill="#e8e8e8"/><circle cx="452.2" cy="540.2" r="1.3" fill="#323232"/><path d="M457.2 544.4h1.100000000000001v1.100000000000001z" fill="#e8e8e8"/><rect x="467.2" y="536" width="6.5" height="7" fill="#484848"/><circle cx="473.6" cy="541.6" r="2.6" fill="#484848" stroke="#323232" stroke-width=".6"/><path d="M472.2 541.6h2.800000000000001" stroke="#323232" stroke-width=".8"/><path d="M481.7 532.7V547M558.5 532.7V547" stroke="#454545" stroke-width="1"/><circle cx="490.7" cy="540" r="3.2" fill="#909090"/><circle cx="494.8" cy="540" r="3.2" fill="#e8e8e8"/><path d="M497.3 544.4h1.100000000000001v1.100000000000001z" fill="#e8e8e8"/><g fill="#454545"><rect x="507.2" y="538.6" width="5.4" height="5"/><rect x="510.6" y="536" width="5.4" height="5" stroke="#323232" stroke-width=".6"/><rect x="543.4" y="538.6" width="5.4" height="5"/><rect x="546.8" y="536" width="5.4" height="5" stroke="#323232" stroke-width=".6"/></g><path d="M528 537.2l-3 2.800000000000001l3 2.800000000000001M531 537.2l3 2.800000000000001l-3 2.800000000000001" fill="none" stroke="#454545" stroke-width="1.2"/></svg>
<span class="t" style="left:455.6px;top:533.6px;font-size:5.2px;color:#e8e8e8;font-weight:bold">A</span>
<div class="a" style="left:561.6px;top:532.2px;width:16px;height:15.8px;background:#4d4d4d;border-radius:2.5px"></div>
<svg style="left:0;top:0" width="1024" height="640" viewBox="0 0 1024 640"><path d="M567 538.8h-1.500000000000001v4.400000000000001h8.6v-4.400000000000001h-1.500000000000001" fill="none" stroke="#e8e8e8" stroke-width="1.1"/><path d="M568.2 541v-2.200000000000001c0-.8.4-1.200000000000001 1.200000000000001-1.200000000000001h2" fill="none" stroke="#e8e8e8" stroke-width="1.1"/><path d="M571 535.6l2.300000000000001 2l-2.300000000000001 2z" fill="#e8e8e8"/><path d="M584.2 536.2l7.6 3.700000000000001l-7.600000000000001 3.700000000000001z" fill="#e8e8e8"/></svg>
<svg style="left:0;top:0" width="1024" height="640" viewBox="0 0 1024 640"><path d="M737.4 537.6h3c3.000000000000001 0 3.000000000000001 4.000000000000001 0 4.000000000000001h-2.400000000000001" fill="none" stroke="#e8e8e8" stroke-width="1"/><path d="M737.8 535.8l-2.400000000000001 1.800000000000001l2.400000000000001 1.800000000000001z" fill="#e8e8e8"/><path d="M735 543.2h8" stroke="#e8e8e8" stroke-width=".9"/><path d="M754.2 540h47.3" stroke="#484848" stroke-width="1"/><circle cx="770.4" cy="540" r="2.9" fill="#323232" stroke="#e8e8e8" stroke-width="1.1"/><path d="M812.8 543.4l2.400000000000001-4l1.200000000000001 2l2.200000000000001-3.600000000000001l4 5.600000000000001z" fill="#e8e8e8"/></svg>
<div class="a" style="left:187px;top:631px;width:50px;height:4.6px;background:#dcdcdc;border-radius:1px"></div>
<div class="a" style="left:835.2px;top:39.4px;width:1.5px;height:598.4px;background:#272727;"></div>
<div class="a" style="left:836.7px;top:39.4px;width:186px;height:598.4px;background:#323232;"></div>
<div class="a" style="left:836.7px;top:39.7px;width:186px;height:7.7px;background:#2b2b2b;"></div>
<div class="a" style="left:836.7px;top:47.4px;width:186px;height:10.6px;background:#2c2c2c;"></div>
<div class="a" style="left:836.7px;top:47.4px;width:29.59999999999991px;height:10.6px;background:#2f2f2f;"></div>
<div class="a" style="left:866.9px;top:47.4px;width:40.5px;height:10.6px;background:#2f2f2f;"></div>
<div class="a" style="left:908px;top:47.4px;width:25.399999999999977px;height:10.6px;background:#2f2f2f;"></div>
<div class="a" style="left:934px;top:47.4px;width:25.399999999999977px;height:10.6px;background:#2f2f2f;"></div>
<div class="a" style="left:960px;top:47.4px;width:31px;height:10.8px;background:#323232;"></div>
<span class="t" style="left:841.2px;top:50px;font-size:6.8px;color:#858585;font-weight:bold;letter-spacing:-.32px">Assets</span>
<span class="t" style="left:871.3px;top:50px;font-size:6.8px;color:#858585;font-weight:bold;letter-spacing:-.32px">Properties</span>
<span class="t" style="left:912.8px;top:50px;font-size:6.8px;color:#858585;font-weight:bold;letter-spacing:-.32px">Color</span>
<span class="t" style="left:938.9px;top:50px;font-size:6.8px;color:#858585;font-weight:bold;letter-spacing:-.32px">Align</span>
<span class="t" style="left:964.6px;top:50px;font-size:6.8px;color:#fff;font-weight:bold;letter-spacing:-.32px">Library</span>
<div class="a" style="left:1012.8px;top:50.3px;width:6.4px;height:4.2px;background:#787878;"></div>
<svg style="left:0;top:0" width="1024" height="640" viewBox="0 0 1024 640"><path d="M1014 42l1.400000000000001 1.400000000000001l-1.400000000000001 1.400000000000001M1016.2 42l1.400000000000001 1.400000000000001l-1.400000000000001 1.400000000000001" fill="none" stroke="#aaa" stroke-width=".7"/></svg>
<div class="a" style="left:839.3px;top:61.7px;width:147.6px;height:11.2px;background:#222;border:1px solid #5c5c5c;border-radius:3px"></div>
<span class="t" style="left:844.9px;top:63.9px;font-size:7px;color:#f0f0f0;letter-spacing:-.3px">rhythm23.fla</span>
<svg style="left:0;top:0" width="1024" height="640" viewBox="0 0 1024 640"><path d="M975 65.5l3 3l3-3" fill="none" stroke="#f0f0f0" stroke-width="1.1"/><path d="M991.2 67.7h6" stroke="#ddd" stroke-width="1"/><circle cx="999" cy="67.7" r="2.3" fill="#ddd"/><rect x="1008.2" y="63.4" width="6.4" height="6.4" fill="#888" stroke="#aaa" stroke-width=".5"/><rect x="1010.8" y="65.6" width="6.4" height="6.4" fill="#888" stroke="#aaa" stroke-width=".5"/></svg>
<div class="a" style="left:836.7px;top:74.8px;width:186px;height:1px;background:#2a2a2a;"></div>
<div class="a" style="left:836.7px;top:157px;width:185px;height:3.2px;background:#474747;"></div>
<span class="t" style="left:838.9px;top:164.2px;font-size:7px;color:#e6e6e6;letter-spacing:-.2px">Empty library</span>
<div class="a" style="left:937.3px;top:161.4px;width:82.8px;height:11.7px;background:#1f1f1f;border:1px solid #686868;border-radius:3px"></div>
<svg style="left:0;top:0" width="1024" height="640" viewBox="0 0 1024 640"><circle cx="945.5" cy="166.2" r="2.6" fill="none" stroke="#e8e8e8" stroke-width="1"/><path d="M947.5 168.3l3 2.600000000000001" stroke="#e8e8e8" stroke-width="1.3" stroke-linecap="round"/><path d="M871.7 187v-6M869.6 183l2.100000000000001-2.200000000000001l2.100000000000001 2.200000000000001" fill="none" stroke="#e8e8e8" stroke-width=".9"/></svg>
<span class="t" style="left:847.1px;top:180.7px;font-size:6.6px;color:#e0e0e0;letter-spacing:-.2px">Name</span>
<span class="t" style="left:987.6px;top:180.7px;font-size:6.6px;color:#e0e0e0;letter-spacing:-.25px">Linkage</span>
<div class="a" style="left:977.5px;top:174px;width:1px;height:19px;background:#3e3e3e;"></div>
<div class="a" style="left:837.1px;top:193px;width:185.4px;height:444.7px;background:#2f2f2f;border:1.1px solid #444;border-radius:2px 2px 0 0"></div>
<div class="a" style="left:838.2px;top:628.3px;width:183.2px;height:8.3px;background:#323232;"></div>
<div class="a" style="left:878.9px;top:630.8px;width:70px;height:4.7px;background:#dcdcdc;border-radius:2.4px"></div>
<svg style="left:0;top:0" width="1024" height="640" viewBox="0 0 1024 640"><rect x="838.8" y="629.8" width="6.6" height="6" fill="none" stroke="#e8e8e8" stroke-width=".9"/><path d="M842.1 631.2v3.200000000000001M840.5 632.8h3.200000000000001" stroke="#e8e8e8" stroke-width=".9"/><path d="M848 630.2h2.800000000000001l.8 1h4.2v4.800000000000001h-7.800000000000001z" fill="#e8e8e8"/><circle cx="861.2" cy="632.9" r="3.4" fill="#e8e8e8"/><rect x="860.7" y="632.3" width="1.1" height="2.6" fill="#323232"/><rect x="860.7" y="630.7" width="1.1" height="1.1" fill="#323232"/><path d="M868 631.3h6.400000000000001M870 631v-1h2.400000000000001v1" fill="none" stroke="#777" stroke-width=".8"/><path d="M868.6 632.2h5.200000000000001l-.5 4.200000000000001h-4.200000000000001z" fill="#777"/></svg>
<div class="a" id="menu" style="left:232px;top:255px;width:196px;height:380.5px;border-radius:5.5px;overflow:hidden;box-shadow:0 0 0 .5px rgba(0,0,0,.55),0 5px 14px rgba(0,0,0,.4)">
<div class="a" style="left:-120px;top:-120px;width:436px;height:620.5px;background:#252525;filter:blur(20px)">
<div class="a" style="left:129px;top:37px;width:375px;height:238px;background:#fff;"></div>
<div class="a" style="left:-12px;top:372px;width:600px;height:140px;background:#323232;"></div>
<div class="a" style="left:-12px;top:-120px;width:600px;height:56px;background:#323232;"></div>
</div>
<div class="a" style="left:-120px;top:-120px;width:436px;height:620.5px;filter:blur(17px);opacity:1">
<div class="a" style="left:291.8px;top:176.5px;width:41.8px;height:41.8px;background:#f40000;border-radius:50%"></div>
</div>
<div class="a" style="left:0;top:0;width:100%;height:100%;border-radius:5.5px;background:rgba(40,40,40,.71);box-shadow:0 0 0 .8px rgba(255,255,255,.13) inset"></div>
</div>
<span class="mi d" style="top:261.2px">Create Classic Tween</span>
<span class="mi d" style="top:274.7px">Create Motion Tween</span>
<span class="mi d" style="top:288.2px">Create Shape Tween</span>
<span class="mi" style="top:301.7px">Convert to Frame-by-Frame Animation</span>
<div class="sep" style="top:314.5px"></div>
<span class="mi" style="top:321.7px">Insert Frame</span>
<span class="sc" style="top:322.8px;font-size:6.2px">F5</span>
<span class="mi d" style="top:335.2px">Remove Frames</span>
<span class="sc" style="top:336.3px;font-size:6.2px">F5</span>
<span class="t" style="left:398.8px;top:335.5px;font-size:8.5px;transform:scaleX(1.75);transform-origin:0 50%;font-family:'DejaVu Sans',sans-serif;color:rgba(255,255,255,.26)">⇧</span>
<div class="sep" style="top:348.0px"></div>
<div class="a" style="left:234.7px;top:351.8px;width:190.2px;height:13.1px;background:linear-gradient(90deg,#3a7be8,#4a8aee);border-radius:2.5px"></div>
<span class="mi" style="top:355.2px">Insert Keyframe</span>
<span class="mi" style="top:368.7px">Insert Blank Keyframe</span>
<span class="mi d" style="top:382.2px">Clear Keyframe</span>
<span class="sc" style="top:383.3px;font-size:6.2px">F6</span>
<span class="t" style="left:398.8px;top:382.5px;font-size:8.5px;transform:scaleX(1.75);transform-origin:0 50%;font-family:'DejaVu Sans',sans-serif;color:rgba(255,255,255,.26)">⇧</span>
<span class="mi" style="top:395.7px">Convert to Keyframes</span>
<span class="sc" style="top:396.8px;font-size:6.2px">F6</span>
<span class="mi" style="top:409.0px">Convert to Blank Keyframes</span>
<span class="sc" style="top:410.1px;font-size:6.2px">F7</span>
<div class="sep" style="top:421.9px"></div>
<span class="mi d" style="top:429.2px">Cut Frames</span>
<span class="sc" style="top:429.5px;font-size:7.8px;letter-spacing:.6px;right:607px;font-family:'DejaVu Sans',sans-serif">⌥⌘X</span>
<span class="mi d" style="top:442.7px">Copy Frames</span>
<span class="sc" style="top:443px;font-size:7.8px;letter-spacing:.6px;right:607px;font-family:'DejaVu Sans',sans-serif">⌥⌘C</span>
<span class="mi d" style="top:456.0px">Paste Frames</span>
<span class="sc" style="top:456.3px;font-size:7.8px;letter-spacing:.6px;right:607px;font-family:'DejaVu Sans',sans-serif">⌥⌘V</span>
<span class="mi d" style="top:469.4px">Paste and Overwrite Frames</span>
<span class="mi d" style="top:482.7px">Clear Frames</span>
<span class="sc" style="top:483px;font-size:7.8px;letter-spacing:.6px;right:607px;font-family:'DejaVu Sans',sans-serif">⌥⌫</span>
<span class="mi" style="top:496.2px">Select All Frames</span>
<span class="sc" style="top:496.5px;font-size:7.8px;letter-spacing:.6px;right:607px;font-family:'DejaVu Sans',sans-serif">⌥⌘A</span>
<div class="sep" style="top:509.0px"></div>
<span class="mi d" style="top:516.2px">Copy Motion</span>
<span class="mi d" style="top:529.7px">Paste Motion</span>
<span class="mi d" style="top:543.2px">Paste Motion Special...</span>
<div class="sep" style="top:556.0px"></div>
<span class="mi d" style="top:563.2px">Reverse Frames</span>
<span class="mi d" style="top:576.7px">Synchronize Symbols</span>
<span class="mi d" style="top:590.2px">Split Audio</span>
<span class="mi d" style="top:603.7px">Show In Library</span>
<div class="sep" style="top:616.5px"></div>
<span class="mi" style="top:623.7px">Actions</span>
<span class="sc" style="top:624.8px;font-size:6.2px">F9</span>
<svg style="left:0;top:0" width="1024" height="640" viewBox="0 0 1024 640"><path d="M415.2 302.1l2.8 2.9l-2.8 2.9" fill="none" stroke="#f0f0f0" stroke-width="1.1"/></svg>
<svg style="left:0;top:0" width="1024" height="640" viewBox="0 0 1024 640"><path d="M276.4 353.4v8.6l2-1.800000000000001l1.400000000000001 3.100000000000001l1.300000000000001-.6l-1.400000000000001-3.000000000000001h2.700000000000001z" fill="#0a0a0a" stroke="#fff" stroke-width=".6" stroke-linejoin="round"/></svg>
</div></body></html>
